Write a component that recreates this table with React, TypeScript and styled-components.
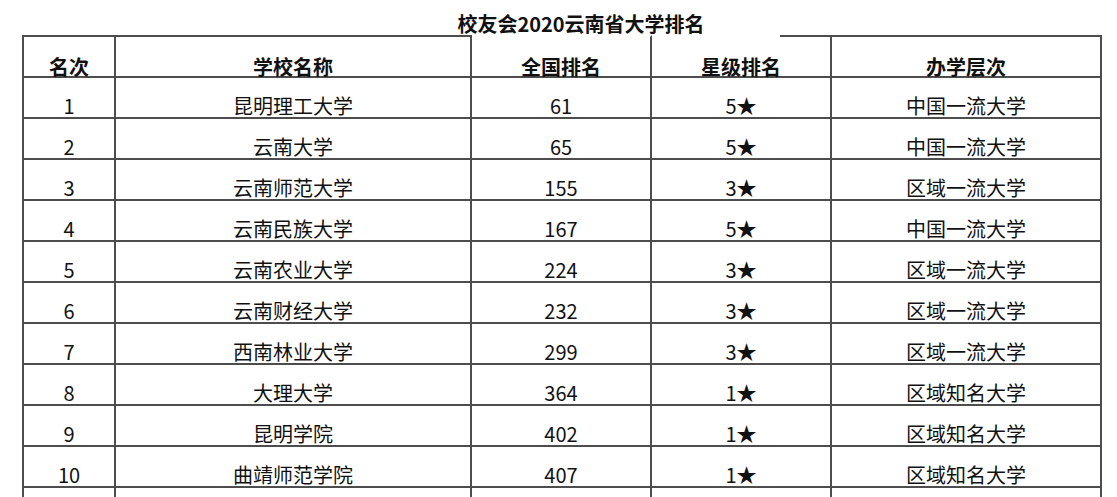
import React from "react";
import styled, { createGlobalStyle, css } from "styled-components";

const LINE = "#4d4d4d";

const Global = createGlobalStyle`
  html, body { margin: 0; padding: 0; background: #fff; overflow: hidden; }
  body { font-family: "Noto Sans CJK SC", "Noto Sans", sans-serif; color: #111; }
`;

const Page = styled.div`
  padding-left: 22px;
  width: 1080px;
`;

const Title = styled.div`
  box-sizing: border-box;
  height: 35px;
  padding-top: 14px;
  padding-left: 38px;
  font-size: 20px;
  line-height: 20px;
  font-weight: 700;
  text-align: center;
  color: #111;
`;

const Grid = styled.div`
  display: grid;
  grid-template-columns: 92px 356px 180px 180px 270px;
  border-left: 2px solid ${LINE};
`;

type TopKind = "full" | "none" | "partial";

const Cell = styled.div<{ $head?: boolean; $top?: TopKind }>`
  box-sizing: border-box;
  height: 41px;
  padding-top: 18px;
  font-size: 20px;
  line-height: 20px;
  text-align: center;
  white-space: nowrap;
  border-right: 2px solid ${LINE};
  border-bottom: 2px solid ${LINE};
  font-weight: ${(p) => (p.$head ? 700 : 400)};
  ${(p) =>
    p.$head &&
    css`
      height: 43px;
      padding-top: 20px;
      border-top: 2px solid ${p.$top === "full" ? LINE : "transparent"};
    `}
  ${(p) =>
    p.$top === "partial" &&
    css`
      background: linear-gradient(${LINE}, ${LINE}) no-repeat right top / 52px 2px;
      background-origin: border-box;
      background-clip: border-box;
    `}
`;

const headers: { label: string; top: TopKind }[] = [
  { label: "名次", top: "full" },
  { label: "学校名称", top: "full" },
  { label: "全国排名", top: "none" },
  { label: "星级排名", top: "partial" },
  { label: "办学层次", top: "full" },
];

const rows: string[][] = [
  ["1", "昆明理工大学", "61", "5★", "中国一流大学"],
  ["2", "云南大学", "65", "5★", "中国一流大学"],
  ["3", "云南师范大学", "155", "3★", "区域一流大学"],
  ["4", "云南民族大学", "167", "5★", "中国一流大学"],
  ["5", "云南农业大学", "224", "3★", "区域一流大学"],
  ["6", "云南财经大学", "232", "3★", "区域一流大学"],
  ["7", "西南林业大学", "299", "3★", "区域一流大学"],
  ["8", "大理大学", "364", "1★", "区域知名大学"],
  ["9", "昆明学院", "402", "1★", "区域知名大学"],
  ["10", "曲靖师范学院", "407", "1★", "区域知名大学"],
  ["", "", "", "", ""],
];

export default function App() {
  return (
    <>
      <Global />
      <Page>
        <Title>校友会2020云南省大学排名</Title>
        <Grid>
          {headers.map((h) => (
            <Cell key={h.label} $head $top={h.top}>
              {h.label}
            </Cell>
          ))}
          {rows.map((r, ri) =>
            r.map((v, i) => <Cell key={ri + "-" + i}>{v}</Cell>)
          )}
        </Grid>
      </Page>
    </>
  );
}
